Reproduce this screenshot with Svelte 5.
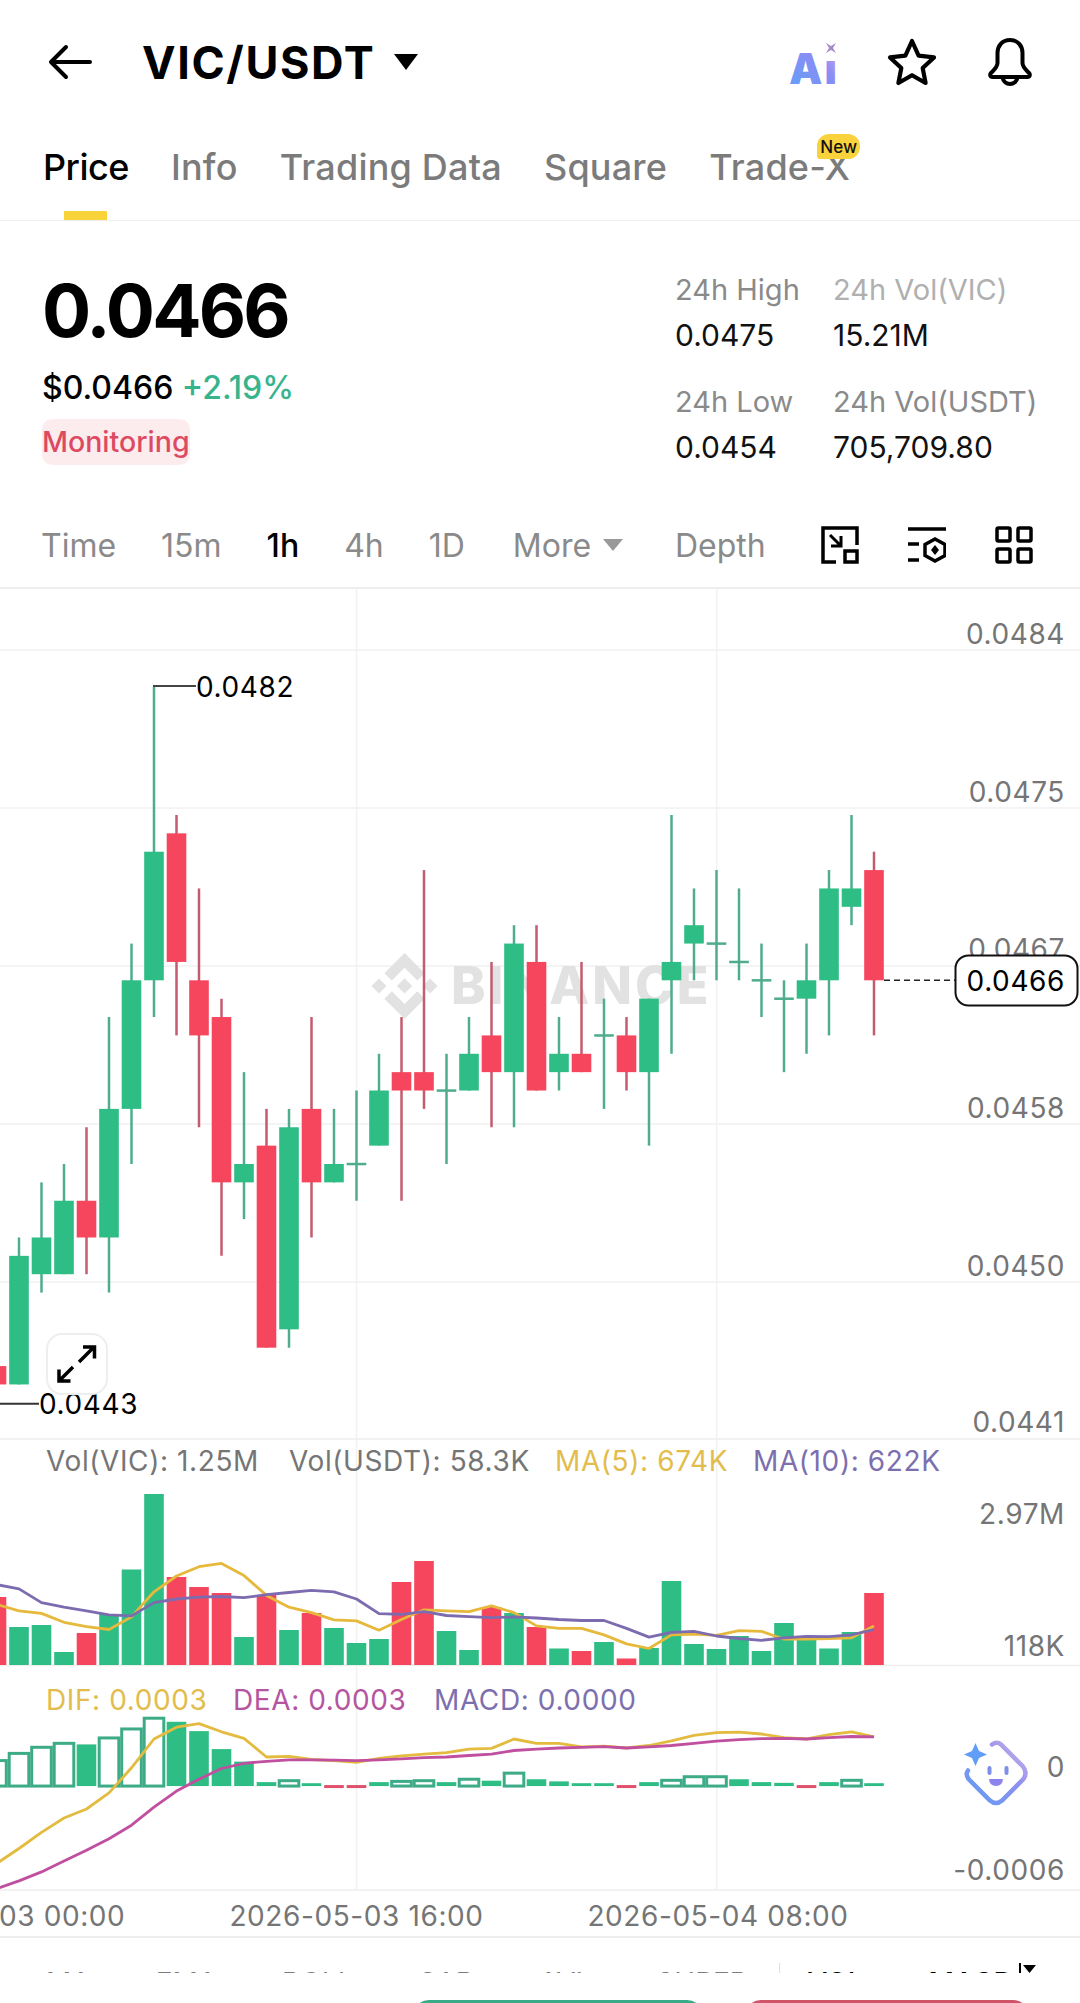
<script>
	const tabs = ['Price', 'Info', 'Trading Data', 'Square', 'Trade-X'];
	const ranges = ['Time', '15m', '1h', '4h', '1D'];
	const indicators = ['MA', 'EMA', 'BOLL', 'SAR', 'AVL', 'SUPER'];

	const X0 = 19;
	const PITCH = 22.5;
	const cx = (i) => X0 + PITCH * i;
	const py = (p) => 979.3 + (466 - p) * 18.37;

	// [high, body top, body bottom, low, up], first entry sits at index -1
	const candles = [
		[445, 445, 444, 443, 0], [452, 451, 444, 444, 1], [455, 452, 450, 449, 1], [456, 454, 450, 450, 1],
		[458, 454, 452, 450, 0], [464, 459, 452, 449, 1], [468, 466, 459, 456, 1], [482, 473, 466, 464, 1],
		[475, 474, 467, 463, 0], [471, 466, 463, 458, 0], [465, 464, 455, 451, 0], [461, 456, 455, 453, 1],
		[459, 457, 446, 446, 0], [459, 458, 447, 446, 1], [464, 459, 455, 452, 0], [459, 456, 455, 455, 1],
		[460, 456, 456, 454, 1], [462, 460, 457, 457, 1], [464, 461, 460, 454, 0], [472, 461, 460, 459, 0],
		[462, 460, 460, 456, 1], [464, 462, 460, 460, 1], [467, 463, 461, 458, 0], [469, 468, 461, 458, 1],
		[469, 467, 460, 460, 0], [464, 462, 461, 460, 1], [467, 462, 461, 461, 0], [465, 463, 463, 459, 1],
		[464, 463, 461, 460, 0], [465, 465, 461, 457, 1], [475, 467, 466, 462, 1], [471, 469, 468, 466, 1],
		[472, 468, 468, 466, 1], [471, 467, 467, 466, 1], [468, 466, 466, 464, 1], [466, 465, 465, 461, 1],
		[468, 466, 465, 462, 1], [472, 471, 466, 463, 1], [475, 471, 470, 469, 1], [473, 472, 466, 463, 0]
	];

	const VOL_BASE = 1664;
	const volumes = [
		68, 38, 40, 13, 32, 51, 95.5, 171, 88, 78, 72, 28, 70, 35, 52, 37, 22, 26, 83, 104,
		34, 15, 58, 52, 38, 16.5, 14, 23, 6.5, 17, 84, 21, 16, 29, 14, 42, 25, 16.5, 33, 72
	];

	// lines are noted in sample rows of the lower panel
	const ly = (v) => 1440 + v / 2.785;
	const ma5 = [
		455, 473, 480, 505, 517, 525, 490, 420, 376, 350, 341, 375, 430, 463, 478, 498, 501, 527, 497, 470,
		473, 475, 459, 478, 515, 522, 522, 540, 565, 578, 540, 538, 541, 528, 530, 552, 552, 550, 548, 515
	];
	const ma10 = [
		400, 412, 450, 463, 473, 484, 487, 450, 440, 435, 433, 436, 428, 422, 416, 420, 440, 481, 483, 475,
		486, 489, 492, 490, 493, 497, 500, 500, 522, 546, 533, 530, 543, 550, 555, 548, 544, 545, 540, 525
	];
	const dif = [
		1177, 1135, 1090, 1050, 1025, 980, 910, 830, 797, 787, 810, 828, 880, 878, 887, 890, 895, 884, 877, 872,
		868, 858, 856, 830, 842, 842, 852, 850, 855, 848, 835, 820, 812, 811, 816, 826, 830, 818, 810, 824
	];
	const dea = [
		1247, 1225, 1200, 1170, 1140, 1108, 1070, 1020, 975, 942, 912, 898, 892, 888, 888, 889, 890, 888, 885, 882,
		880, 876, 872, 862, 858, 855, 853, 851, 855, 852, 848, 842, 836, 832, 829, 828, 830, 826, 823, 824
	];
	// [kind, top] h = hollow, s = solid, r = red below zero
	const hist = [
		['h', 890], ['h', 870], ['h', 853], ['h', 842], ['s', 845], ['h', 827], ['h', 802], ['h', 772],
		['s', 782], ['s', 808], ['s', 858], ['s', 893], ['s', 950], ['h', 946], ['s', 953], ['r', 968],
		['r', 968], ['s', 950], ['h', 948], ['h', 946], ['s', 950], ['h', 942], ['s', 946], ['h', 925],
		['s', 942], ['s', 948], ['s', 953], ['s', 953], ['r', 968], ['s', 950], ['h', 945], ['h', 935],
		['h', 935], ['s', 942], ['s', 950], ['s', 952], ['r', 968], ['s', 950], ['h', 945], ['s', 953]
	];
	const HIST_BASE = ly(961);

	const line = (values) =>
		values.map((v, i) => `${cx(i - 1).toFixed(1)},${ly(v).toFixed(1)}`).join(' ');

	const gridY = [649, 807, 965, 1123, 1281];
	const gridX = [356.5, 716.7];
	const priceLabels = [
		['0.0484', 643], ['0.0475', 801], ['0.0467', 958], ['0.0458', 1117], ['0.0450', 1275], ['0.0441', 1431]
	];
</script>

<div class="page">
	<header class="nav">
		<svg class="back" width="44" height="36" viewBox="0 0 44 36">
			<path d="M42 18H4M18 3 3 18l15 15" fill="none" stroke="#000" stroke-width="4" stroke-linecap="round" stroke-linejoin="round" />
		</svg>
		<span class="pair">VIC/USDT</span>
		<svg class="caret" width="24" height="16" viewBox="0 0 24 16"><path d="M0 0h24L12 16z" fill="#000" /></svg>
		<div class="nav-icons">
			<svg width="50" height="48" viewBox="0 0 50 48">
				<defs>
					<linearGradient id="ai" x1="0" y1="1" x2="1" y2="0">
						<stop offset="0" stop-color="#5ba4f8" />
						<stop offset="0.6" stop-color="#8a8cf4" />
						<stop offset="1" stop-color="#d0a8ee" />
					</linearGradient>
				</defs>
				<text x="1" y="46" class="ai-text" fill="url(#ai)">Aı</text>
				<path d="M38 5l5 3 5-3-3 5 3 5-5-3-5 3 3-5z" fill="#a58ccb" />
			</svg>
			<svg width="50" height="48" viewBox="0 0 50 48">
				<path d="M25 3l6.600 14.600 15.400 1.800-11.300 10.700L38.600 45 25 37.200 11.400 45l2.900-14.900L3 19.400l15.400-1.800z" fill="none" stroke="#000" stroke-width="4.200" stroke-linejoin="round" />
			</svg>
			<svg width="48" height="50" viewBox="0 0 48 50">
				<path d="M24 3c-8 0-12.500 6-12.500 13v10c0 4-3 6.500-6.500 10-1.500 1.500-.8 4 1.500 4h35c2.300 0 3-2.500 1.500-4-3.500-3.500-6.500-6-6.500-10V16c0-7-4.500-13-12.500-13z" fill="none" stroke="#000" stroke-width="4" stroke-linejoin="round" />
				<path d="M16.500 40.500c.8 4 3.800 6.500 7.500 6.500s6.700-2.500 7.500-6.500" fill="none" stroke="#000" stroke-width="4" />
			</svg>
		</div>
	</header>

	<nav class="tabs">
		{#each tabs as tab, i}
			<span class="tab" class:active={i === 0}>
				{tab}
				{#if tab === 'Trade-X'}<em class="badge">New</em>{/if}
				{#if i === 0}<i class="underline"></i>{/if}
			</span>
		{/each}
	</nav>

	<section class="summary">
		<div class="quote">
			<div class="last">0.0466</div>
			<div class="sub"><span>$0.0466</span> <span class="up">+2.19%</span></div>
			<div class="tag">Monitoring</div>
		</div>
		<dl class="stats">
			<div><dt>24h High</dt><dd>0.0475</dd></div>
			<div><dt class="light">24h Vol(VIC)</dt><dd>15.21M</dd></div>
			<div><dt>24h Low</dt><dd>0.0454</dd></div>
			<div><dt>24h Vol(USDT)</dt><dd>705,709.80</dd></div>
		</dl>
	</section>

	<div class="toolbar">
		<div class="ranges">
			{#each ranges as r}
				<span class:on={r === '1h'}>{r}</span>
			{/each}
			<span class="more">More <svg width="20" height="12" viewBox="0 0 20 12"><path d="M0 0h20L10 12z" fill="#999" /></svg></span>
		</div>
		<span class="depth">Depth</span>
		<div class="tools">
			<svg width="38" height="38" viewBox="0 0 38 38" fill="none" stroke="#000" stroke-width="3.5">
				<path d="M15 36H2V2h34v17" />
				<path d="M9 9l10 10M20 10v10H10" stroke-width="3" />
				<rect x="24" y="25" width="12" height="11" />
			</svg>
			<svg width="38" height="38" viewBox="0 0 38 38" fill="none" stroke="#000" stroke-width="3.5">
				<path d="M0 3h38M0 18h11M0 34h11" />
				<path d="M27 13l10 5.500v11L27 35l-10-5.500v-11z" />
				<path d="M27 19l4 5-4 5-4-5z" fill="#000" stroke="none" />
			</svg>
			<svg width="38" height="38" viewBox="0 0 38 38" fill="none" stroke="#000" stroke-width="3.5">
				<rect x="2" y="2" width="13" height="13" rx="1.500" />
				<rect x="23" y="2" width="13" height="13" rx="1.500" />
				<rect x="2" y="23" width="13" height="13" rx="1.500" />
				<rect x="23" y="23" width="13" height="13" rx="1.500" />
			</svg>
		</div>
	</div>

	<svg class="chart" width="1080" height="1348" viewBox="0 587 1080 1348">
		<defs>
			<linearGradient id="bot" x1="0" y1="1" x2="1" y2="0">
				<stop offset="0" stop-color="#5f9df6" />
				<stop offset="0.6" stop-color="#8f8fee" />
				<stop offset="1" stop-color="#d3b5e8" />
			</linearGradient>
		</defs>

		{#each gridX as x}
			<line x1={x} x2={x} y1="587" y2="1889" class="grid" />
		{/each}
		{#each gridY as y}
			<line x1="0" x2="1080" y1={y} y2={y} class="grid" />
		{/each}
		<line x1="0" x2="1080" y1="1438" y2="1438" class="rule" />
		<line x1="0" x2="1080" y1="1664.5" y2="1664.5" class="rule" />
		<line x1="0" x2="1080" y1="1889" y2="1889" class="rule" />

		<!-- watermark -->
		<g fill="#e2e2e2">
			<path transform="translate(371.6 952) scale(2.06)" d="M9.800 13.400 16 7.200l6.200 6.200 3.600-3.600L16 0 6.200 9.800l3.600 3.600zM0 16l3.600-3.600L7.200 16l-3.600 3.600L0 16zm9.800 2.600L16 24.800l6.200-6.200 3.600 3.600-9.800 9.800-9.800-9.800zM24.800 16l3.600-3.600L32 16l-3.600 3.600L24.800 16zm-5.100 0L16 12.300l-3.700 3.700 3.700 3.700 3.700-3.700z" />
			<text x="451" y="1003" class="mark">BINANCE</text>
		</g>

		<!-- candles -->
		{#each candles as [hi, top, bot, lo, up], k}
			{@const x = cx(k - 1)}
			<line x1={x} x2={x} y1={py(hi)} y2={py(lo)} class={up ? 'wick-up' : 'wick-down'} />
			{#if top === bot}
				<rect x={x - 9.8} y={py(top) - 1.2} width="19.6" height="2.5" fill="#4fac8d" />
			{:else}
				<rect x={x - 9.8} y={py(top)} width="19.6" height={py(bot) - py(top)} fill={up ? '#2ebd85' : '#f6465d'} />
			{/if}
		{/each}

		<!-- high / low marks -->
		<line x1="153" x2="196" y1="685" y2="685" stroke="#444" stroke-width="2" />
		<text x="196" y="696" class="label black">0.0482</text>
		<line x1="0" x2="39" y1="1402.7" y2="1402.7" stroke="#333" stroke-width="2" />
		<text x="39" y="1413" class="label black">0.0443</text>

		<!-- price axis -->
		{#each priceLabels as [text, y]}
			<text x="1065" {y} class="label axis" text-anchor="end">{text}</text>
		{/each}

		<!-- last price -->
		<line x1="884" x2="955" y1="979.3" y2="979.3" stroke="#222" stroke-width="1.5" stroke-dasharray="6 4" />
		<rect x="955.5" y="954.5" width="122" height="50" rx="13" fill="#fff" stroke="#111" stroke-width="2" />
		<text x="1065" y="990" class="label black" text-anchor="end">0.0466</text>

		<!-- expand button -->
		<rect x="47" y="1333" width="60" height="60" rx="15" fill="#fff" stroke="#eee" stroke-width="2" />
		<path d="M94 1346l-15 15M83 1346h11.500v11.500M59 1380l14-14M59 1368.500V1380h11.500" fill="none" stroke="#000" stroke-width="3.5" />

		<!-- volume -->
		<text x="46" y="1470" class="label axis">Vol(VIC): 1.25M</text>
		<text x="289" y="1470" class="label axis">Vol(USDT): 58.3K</text>
		<text x="555" y="1470" class="label yellow">MA(5): 674K</text>
		<text x="753" y="1470" class="label purple">MA(10): 622K</text>
		<text x="1065" y="1523" class="label axis" text-anchor="end">2.97M</text>
		<text x="1065" y="1655" class="label axis" text-anchor="end">118K</text>

		{#each volumes as h, k}
			<rect x={cx(k - 1) - 9.8} y={VOL_BASE - h} width="19.6" height={h} fill={candles[k][4] ? '#2ebd85' : '#f6465d'} />
		{/each}
		<polyline points={line(ma5)} class="ma" stroke="#e6b93c" />
		<polyline points={line(ma10)} class="ma" stroke="#7d6bb0" />

		<!-- macd -->
		<text x="46" y="1708.5" class="label yellow">DIF: 0.0003</text>
		<text x="233" y="1708.5" class="label pink">DEA: 0.0003</text>
		<text x="434" y="1708.5" class="label purple">MACD: 0.0000</text>

		{#each hist as [kind, top], k}
			{@const x = cx(k - 1)}
			{#if kind === 'h'}
				<rect x={x - 9.8} y={ly(top)} width="19.6" height={HIST_BASE - ly(top)} fill="#fff" stroke="#3dab87" stroke-width="3" />
			{:else if kind === 's'}
				<rect x={x - 9.8} y={ly(top)} width="19.6" height={HIST_BASE - ly(top)} fill="#2ebd85" />
			{:else}
				<rect x={x - 9.8} y={HIST_BASE - 1} width="19.6" height="3" fill="#e0506a" />
			{/if}
		{/each}
		<polyline points={line(dif)} class="ma" stroke="#e3bb3f" />
		<polyline points={line(dea)} class="ma" stroke="#c04fa0" />

		<text x="1065" y="1776" class="label axis" text-anchor="end">0.0000</text>
		<text x="1065" y="1879" class="label axis" text-anchor="end">-0.0006</text>

		<!-- assistant button covers the axis value -->
		<rect x="950" y="1735" width="97" height="75" fill="#fff" />
		<path d="M992 1743.500q5-3.500 9 0l22 22q5 6.500 0 13l-21 21q-6 5-12 0l-21-21q-4-5-1-9" fill="none" stroke="url(#bot)" stroke-width="4.5" stroke-linecap="round" />
		<path d="M975.500 1742l3.500 8 8 3.500-8 3.500-3.500 8-3.500-8-8-3.500 8-3.500z" fill="#5f9df6" />
		<rect x="987.5" y="1765" width="4" height="9" rx="2" fill="#7f8fe8" />
		<rect x="1004.5" y="1765" width="4" height="9" rx="2" fill="#7f8fe8" />
		<path d="M989 1778h14q-.5 7-7 7t-7-7z" fill="#8a84ec" />

		<!-- time axis -->
		<text x="-5" y="1925" class="label axis" text-anchor="middle">2026-05-03 00:00</text>
		<text x="356.5" y="1925" class="label axis" text-anchor="middle">2026-05-03 16:00</text>
		<text x="718" y="1925" class="label axis" text-anchor="middle">2026-05-04 08:00</text>
	</svg>

	<div class="indicators">
		{#each indicators as name}
			<span>{name}</span>
		{/each}
		<i class="divider"></i>
		<span class="selected">VOL</span>
		<span class="selected">MACD</span>
		<i class="bar"></i>
		<svg class="more-caret" width="13" height="8" viewBox="0 0 13 8"><path d="M0 0h13L6.500 8z" fill="#000" /></svg>
	</div>

	<div class="actions">
		<div class="buy"></div>
		<div class="sell"></div>
	</div>
</div>

<style>
	:global(body) {
		background: #fff;
		margin: 0;
	}

	.page {
		font-family: Inter, 'Liberation Sans', sans-serif;
		height: 2003px;
		overflow: hidden;
		width: 1080px;
	}

	.nav {
		align-items: center;
		display: flex;
		height: 124px;
		padding-left: 48px;
	}

	.pair {
		font-size: 45px;
		font-weight: 700;
		letter-spacing: 1.6px;
		margin-left: 50px;
		width: 252px;
	}

	.nav-icons {
		align-items: center;
		display: flex;
		gap: 49px;
		margin-left: auto;
		margin-right: 46px;
	}

	.ai-text {
		font-family: Inter, sans-serif;
		font-size: 42px;
		font-weight: 900;
		letter-spacing: 2px;
	}

	.tabs {
		border-bottom: 1px solid #eee;
		box-sizing: border-box;
		color: #7b7b7b;
		display: flex;
		font-size: 36px;
		font-weight: 500;
		gap: 42px;
		height: 97px;
		letter-spacing: 0.2px;
		line-height: 44px;
		padding: 21px 0 0 43px;
	}

	.tab {
		position: relative;
	}

	.active {
		color: #000;
		letter-spacing: -0.5px;
	}

	.underline {
		background: #f8d33a;
		bottom: 0;
		height: 9px;
		left: 21px;
		position: absolute;
		width: 43px;
	}

	.badge {
		align-items: center;
		background: #fad23c;
		border-radius: 12px 12px 12px 3px;
		color: #111;
		display: flex;
		font-size: 17px;
		font-style: normal;
		height: 25px;
		justify-content: center;
		letter-spacing: 0;
		position: absolute;
		right: -10px;
		top: -11px;
		width: 43px;
	}

	.summary {
		display: flex;
		height: 270px;
		justify-content: space-between;
	}

	.quote {
		padding: 52px 0 0 42px;
	}

	.last {
		font-size: 73px;
		font-weight: 700;
		letter-spacing: -2.8px;
		line-height: 76px;
	}

	.sub {
		font-size: 32px;
		font-weight: 500;
		line-height: 40px;
		margin-top: 19px;
	}

	.up {
		color: #37b48c;
	}

	.tag {
		background: #fdecee;
		border-radius: 10px;
		color: #dc4a62;
		font-size: 28.5px;
		font-weight: 500;
		line-height: 46px;
		margin-top: 11px;
		width: 148px;
	}

	.stats {
		align-self: start;
		display: grid;
		font-size: 29px;
		grid-template-columns: 158px 247px;
		margin: 48px 0 0;
		row-gap: 22px;
	}

	dt {
		color: #8a8a8a;
		line-height: 42px;
	}

	.light {
		color: #b0b0b0;
	}

	dd {
		color: #111;
		font-size: 30px;
		line-height: 48px;
		margin: 0;
	}

	.toolbar {
		align-items: center;
		border-bottom: 2px solid #eee;
		box-sizing: border-box;
		color: #8a8a8a;
		display: flex;
		font-size: 32px;
		height: 98px;
		padding: 12px 47px 0 41px;
	}

	.ranges {
		display: flex;
		gap: 45px;
		width: 634px;
	}

	.on {
		color: #000;
		font-weight: 500;
	}

	.more {
		margin-left: 3px;
	}

	.more svg {
		margin-left: 3px;
		vertical-align: 6px;
	}

	.tools {
		align-items: center;
		display: flex;
		gap: 49px;
		margin-left: auto;
	}

	.chart {
		display: block;
		margin-top: -1px;
	}

	.grid {
		stroke: #f1f1f1;
		stroke-width: 1.5;
	}

	.rule {
		stroke: #eeeeee;
		stroke-width: 1.5;
	}

	.mark {
		font-family: Inter, sans-serif;
		font-size: 52px;
		font-weight: 800;
		letter-spacing: 3px;
	}

	.wick-up {
		stroke: #4fac8d;
		stroke-width: 2.5;
	}

	.wick-down {
		stroke: #c45b6e;
		stroke-width: 2.5;
	}

	.label {
		font-family: Inter, sans-serif;
		font-size: 28px;
		letter-spacing: 0.6px;
	}

	.black {
		fill: #000;
	}

	.axis {
		fill: #757575;
	}

	.yellow {
		fill: #e2bd4d;
	}

	.purple {
		fill: #7d6fae;
	}

	.pink {
		fill: #b6559f;
	}

	.ma {
		fill: none;
		stroke-linejoin: round;
		stroke-width: 2.8;
	}

	.indicators {
		align-items: flex-start;
		border-top: 2px solid #eee;
		box-sizing: border-box;
		color: #7b7b7b;
		display: flex;
		font-size: 28px;
		gap: 65px;
		height: 37px;
		line-height: 27px;
		overflow: hidden;
		padding: 32px 0 0 46px;
		position: relative;
	}

	.divider {
		background: #ddd;
		height: 10px;
		margin: -7px -38px 0 -34px;
		width: 1.5px;
	}

	.selected {
		color: #000;
		font-weight: 500;
	}

	.bar {
		background: #000;
		height: 12px;
		margin: -7px 0 0 -60px;
		width: 2.5px;
	}

	.more-caret {
		margin: -5px 0 0 -63px;
	}

	.actions {
		display: flex;
		gap: 42px;
		margin-top: 27px;
		padding-left: 413px;
	}

	.buy,
	.sell {
		border-radius: 16px 16px 0 0;
		height: 40px;
	}

	.buy {
		background: #3baa87;
		width: 290px;
	}

	.sell {
		background: #cf5468;
		width: 284px;
	}
</style>
